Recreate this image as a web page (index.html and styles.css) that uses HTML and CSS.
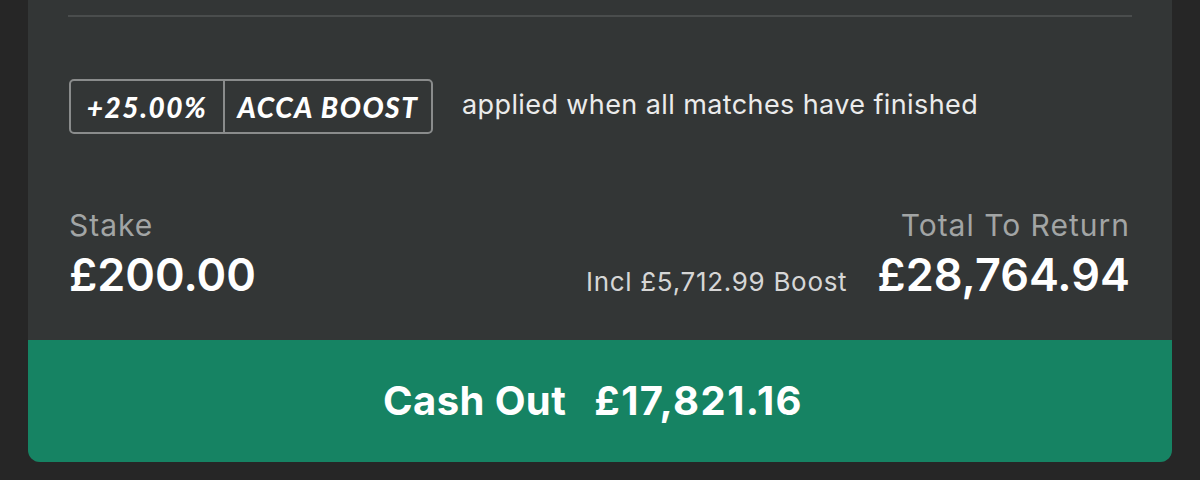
FILE: index.html
```html
<!DOCTYPE html>
<html>
<head>
<meta charset="utf-8">
<link rel="stylesheet" href="styles.css">
</head>
<body>
<div class="card">
  <div class="divider"></div>
  <div class="boost-row">
    <div class="badge">
      <span class="badge-pct">+25.00%</span>
      <span class="badge-name">ACCA BOOST</span>
    </div>
    <span class="boost-note">applied when all matches have finished</span>
  </div>
  <div class="summary">
    <div class="col">
      <div class="label">Stake</div>
      <div class="amount">£200.00</div>
    </div>
    <div class="col right">
      <div class="label">Total To Return</div>
      <div class="amount-line">
        <span class="incl">Incl £5,712.99 Boost</span>
        <span class="amount">£28,764.94</span>
      </div>
    </div>
  </div>
  <div class="cashout">
    <span class="cash-label">Cash Out</span>
    <span class="cash-amt">£17,821.16</span>
  </div>
</div>
</body>
</html>
```
FILE: styles.css
```css
html, body {
  margin: 0;
  padding: 0;
}
body {
  background: #262626;
  width: 1200px;
  height: 480px;
  overflow: hidden;
  font-family: Inter, "Noto Sans", sans-serif;
  color: #ffffff;
}
.card {
  margin: 0 28px;
  background: #333636;
  border-radius: 0 0 12px 12px;
  overflow: hidden;
  padding-top: 15px;
}
.divider {
  height: 2px;
  background: #4a4d4d;
  margin: 0 40px;
}
.boost-row {
  display: flex;
  align-items: center;
  margin: 62px 40px 0 41px;
  height: 55px;
}
.badge {
  display: flex;
  height: 55px;
  box-sizing: border-box;
  border: 2px solid #8a8c8c;
  border-radius: 5px;
  font-family: Lato, "Liberation Sans", sans-serif;
  font-style: italic;
  font-weight: 900;
  font-size: 28px;
  letter-spacing: 1.6px;
}
.badge span {
  display: flex;
  align-items: center;
}
.badge-pct {
  width: 152px;
  justify-content: center;
  border-right: 2px solid #8a8c8c;
}
.badge-name {
  width: 206px;
  justify-content: center;
}
.boost-note {
  margin-left: 29px;
  margin-top: -5px;
  font-size: 27px;
  color: #ebebeb;
  letter-spacing: 0.4px;
}
.summary {
  display: flex;
  justify-content: space-between;
  margin: 73px 42px 0 41px;
  height: 133px;
}
.col {
  display: flex;
  flex-direction: column;
}
.col.right {
  align-items: flex-end;
}
.label {
  font-size: 30px;
  color: #a2a5a5;
  line-height: 36px;
  letter-spacing: 1px;
}
.amount {
  font-size: 45px;
  font-weight: 600;
  line-height: 56px;
  margin-top: 4px;
}
.amount-line {
  display: flex;
  align-items: baseline;
}
.incl {
  font-size: 26px;
  color: #d6d6d6;
  margin-right: 30px;
  letter-spacing: 0.7px;
}
.cashout {
  height: 122px;
  background: #168363;
  display: flex;
  justify-content: center;
  align-items: center;
  gap: 28px;
  font-size: 40px;
  font-weight: 700;
  padding-bottom: 2px;
  padding-right: 14px;
  box-sizing: border-box;
}
.cash-label {
  letter-spacing: 0.4px;
}
.cash-amt {
  letter-spacing: 1.4px;
}
```
